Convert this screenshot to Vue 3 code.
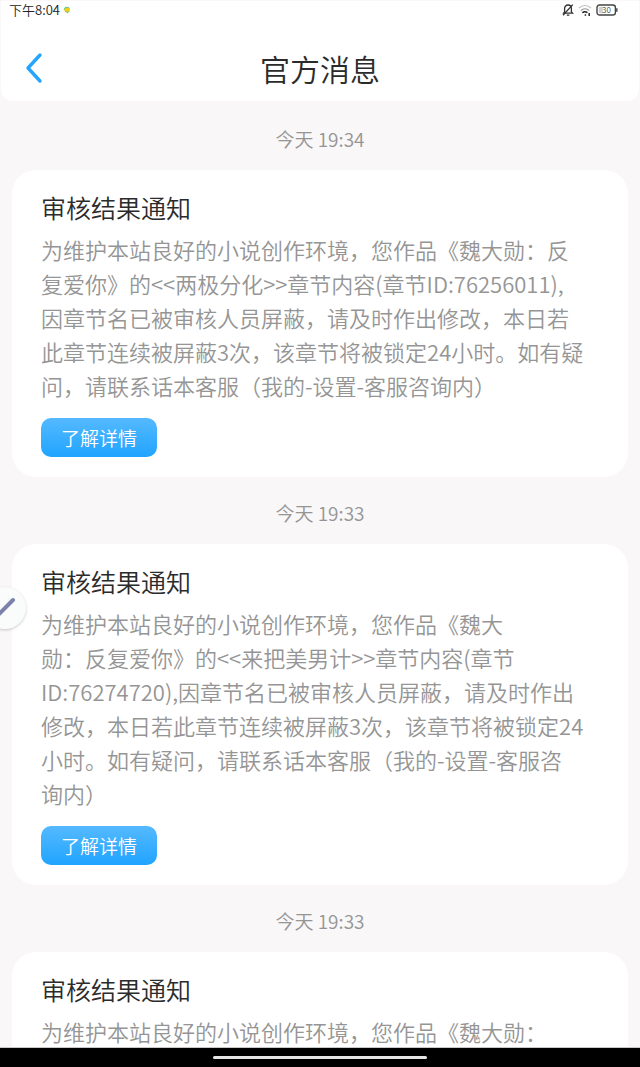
<template>
  <div class="page" lang="zh-CN">
    <header class="header">
      <div class="status-bar">
        <span class="time">下午8:04</span>
        <svg class="dot-icon" viewBox="0 0 8 8">
          <path d="M1 3.8 2.2 1.4h3.6L7 3.8 5.8 5.8H2.2z" fill="#f3cf12" />
          <path d="M1 3.8 2.2 1.4h3L6.6 2.4" fill="none" stroke="#5fc48a" />
          <path d="M2.2 5.6 4.4 6.2 6.4 5.4M4.4 5.8v1.4" fill="none" stroke="#8bbb4a" />
        </svg>
        <div class="status-icons">
          <svg class="mute-icon" viewBox="0 0 12 14">
            <path d="M2.6 9.8V5.6C2.6 3.4 4 2 6 2s3.4 1.4 3.4 3.6v3.2l1.2 1.4H1.6l1-1.4" />
            <path d="M4.8 12.2h2.6M10.8 1.6 1 12.2" />
          </svg>
          <svg class="wifi-icon" viewBox="0 0 14 14">
            <path d="M.8 5.2C4.4 1.6 9.6 1.6 13.2 5.2" stroke="#c4c4c4" />
            <path d="M2.8 7.6c2.4-2.2 6-2.2 8.4 0" stroke="#999" />
            <path d="M4.4 9.8c1.4-1.4 3.6-1.4 5 0" stroke="#222" stroke-width="1.6" />
            <path d="M7.4 11.2v1.6M11.2 10v3" stroke="#222" stroke-width="1.5" />
          </svg>
          <svg class="battery-icon" viewBox="0 0 22 12">
            <rect x="1" y="1" width="18.4" height="10" rx="2.6" fill="#fff" stroke="#444" stroke-width="1.4" />
            <rect x="2.8" y="2.8" width="4" height="6.4" rx="1" fill="#d0d0d0" />
            <path d="M20.8 4.2v3.6" stroke="#444" stroke-width="1.4" />
            <text x="10.4" y="9" text-anchor="middle">30</text>
          </svg>
        </div>
      </div>
      <div class="title-bar">
        <button class="back" aria-label="返回">
          <svg viewBox="0 0 18 32">
            <path d="M15 3 3 16l12 13" />
          </svg>
        </button>
        <h1>官方消息</h1>
      </div>
    </header>

    <main class="message-list">
      <template v-for="(item, index) in messages" :key="index">
        <time class="date">{{ item.time }}</time>
        <article class="card">
          <h2>{{ item.title }}</h2>
          <p>{{ item.content.join('\n') }}</p>
          <button v-if="item.hasDetail" class="detail">了解详情</button>
        </article>
      </template>
    </main>

    <button class="float-btn" aria-label="编辑">
      <svg viewBox="0 0 42 42">
        <path d="M15 27 29 13" />
      </svg>
    </button>

    <footer class="nav-bar">
      <div class="nav-handle"></div>
    </footer>
  </div>
</template>

<script setup>
import { ref } from 'vue'

const messages = ref([
  {
    time: '今天 19:34',
    title: '审核结果通知',
    hasDetail: true,
    content: [
      '为维护本站良好的小说创作环境，您作品《魏大勋：反',
      '复爱你》的<<两极分化>>章节内容(章节ID:76256011),',
      '因章节名已被审核人员屏蔽，请及时作出修改，本日若',
      '此章节连续被屏蔽3次，该章节将被锁定24小时。如有疑',
      '问，请联系话本客服（我的-设置-客服咨询内）',
    ],
  },
  {
    time: '今天 19:33',
    title: '审核结果通知',
    hasDetail: true,
    content: [
      '为维护本站良好的小说创作环境，您作品《魏大',
      '勋：反复爱你》的<<来把美男计>>章节内容(章节',
      'ID:76274720),因章节名已被审核人员屏蔽，请及时作出',
      '修改，本日若此章节连续被屏蔽3次，该章节将被锁定24',
      '小时。如有疑问，请联系话本客服（我的-设置-客服咨',
      '询内）',
    ],
  },
  {
    time: '今天 19:33',
    title: '审核结果通知',
    hasDetail: false,
    content: ['为维护本站良好的小说创作环境，您作品《魏大勋：'],
  },
])
</script>

<style>
body {
  background: #f9f7f8;
}
</style>

<style scoped>
.page {
  position: relative;
  display: flex;
  flex-direction: column;
  height: 100vh;
  overflow: hidden;
  background: #f9f7f8;
  color: #2b2b2b;
  font-family: 'Noto Sans CJK SC', sans-serif;
  font-weight: 350;
}
button {
  padding: 0;
  border: none;
  font-family: inherit;
  font-weight: inherit;
  cursor: pointer;
}
svg {
  display: block;
}
.header {
  flex: none;
  margin: 1px 1px 0;
  background: #fff;
  border-radius: 0 0 12px 12px;
}
.status-bar {
  display: flex;
  align-items: center;
  height: 18px;
  padding: 0 21px 0 8px;
}
.time {
  font-size: 13px;
  line-height: 18px;
  color: #222;
}
.dot-icon {
  width: 8px;
  height: 8px;
  margin-left: 3px;
}
.status-icons {
  display: flex;
  align-items: center;
  gap: 4px;
  margin-left: auto;
}
.mute-icon {
  width: 12px;
  height: 14px;
  fill: none;
  stroke: #333;
  stroke-width: 1.3;
}
.wifi-icon {
  width: 14px;
  height: 14px;
  fill: none;
  stroke-width: 1.2;
}
.battery-icon {
  width: 22px;
  height: 12px;
}
.battery-icon text {
  font-size: 8px;
  fill: #444;
}
.title-bar {
  display: grid;
  grid-template-columns: 18px 1fr 18px;
  align-items: center;
  height: 82px;
  padding: 16px 24px 0;
  box-sizing: border-box;
}
.back {
  background: none;
}
.back svg {
  width: 18px;
  height: 32px;
  fill: none;
  stroke: #25a5fc;
  stroke-width: 3.4;
  stroke-linecap: round;
  stroke-linejoin: round;
}
h1 {
  margin: 0;
  font-size: 30px;
  font-weight: inherit;
  line-height: 40px;
  text-align: center;
}
.message-list {
  flex: 1;
  min-height: 0;
  padding: 2px 12px 0;
  overflow: hidden;
}
.date {
  display: block;
  height: 67px;
  font-size: 19px;
  line-height: 72px;
  text-align: center;
  color: #959595;
}
.card {
  padding: 20px 29px;
  background: #fff;
  border-radius: 24px;
}
h2 {
  margin: 0 0 8px;
  font-size: 25px;
  font-weight: inherit;
  line-height: 34px;
}
p {
  margin: 0 0 16px;
  font-size: 22px;
  line-height: 34px;
  white-space: pre-line;
  color: #959595;
}
.detail {
  display: block;
  width: 116px;
  height: 39px;
  border-radius: 10px;
  background: linear-gradient(#55b9ff, #20a4ff);
  font-size: 19px;
  line-height: 39px;
  color: #fff;
}
.float-btn {
  position: absolute;
  left: -16px;
  top: 55%;
  width: 42px;
  height: 42px;
  border-radius: 50%;
  background: #fafbfb;
  box-shadow: 0 1px 3px rgba(0, 0, 0, 0.2);
}
.float-btn svg {
  width: 42px;
  height: 42px;
  fill: none;
  stroke: #7b83ac;
  stroke-width: 4;
  stroke-linecap: round;
}
.nav-bar {
  display: flex;
  flex: none;
  align-items: center;
  justify-content: center;
  height: 19px;
  border-top: 1px solid #c8c8c8;
  background: #000;
}
.nav-handle {
  width: 33.33%;
  height: 3px;
  border-radius: 2px;
  background: #e6e6e6;
}
</style>
